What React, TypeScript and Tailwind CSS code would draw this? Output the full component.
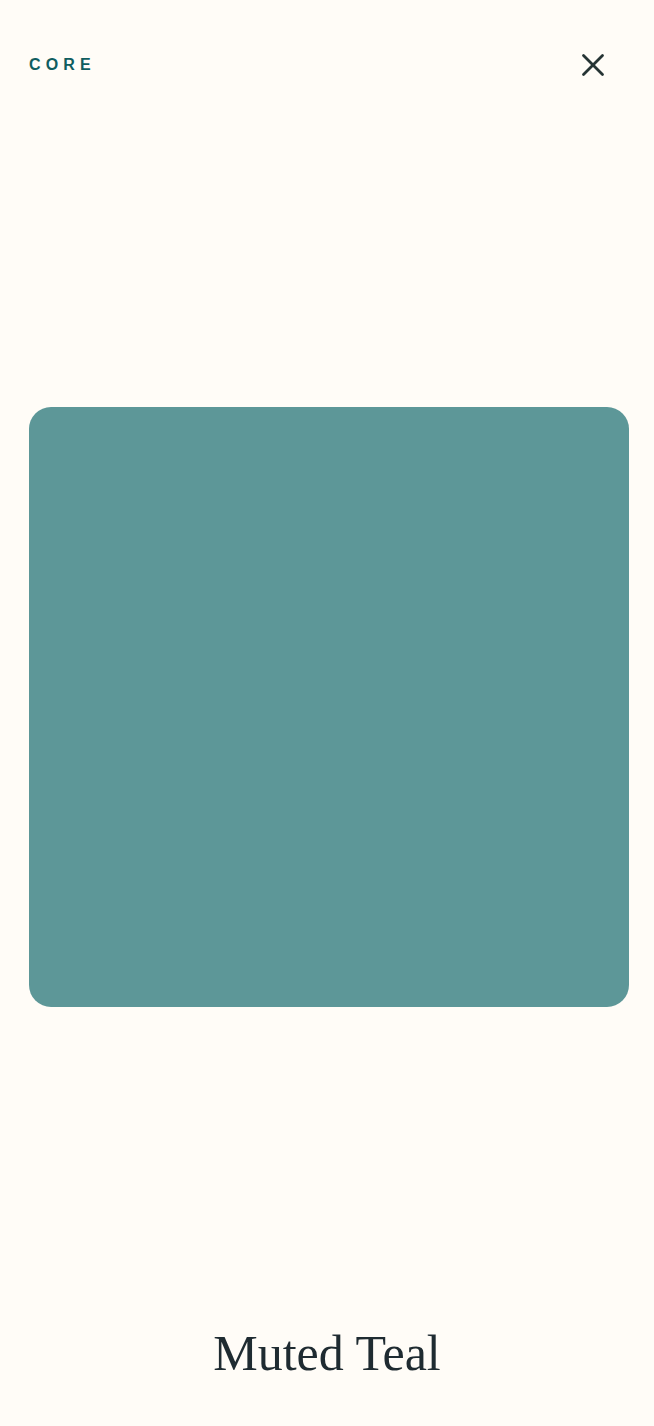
import React from "react";

export default function App() {
  return (
    <div className="flex min-h-screen w-full flex-col bg-[#fffcf7]">
      <header className="flex h-[128px] items-center justify-between pl-[29px] pr-[47px] pt-[2px]">
        <span
          className="text-[16px] font-bold leading-none tracking-[0.32em] text-[#0f5d5f]"
          style={{ fontFamily: '"Liberation Sans", Arial, sans-serif' }}
        >
          CORE
        </span>
        <button className="flex h-[28px] w-[28px] items-center justify-center text-[#263434]" aria-label="Close">
          <svg width="24" height="24" viewBox="0 0 24 24" fill="none" stroke="currentColor" strokeWidth="2.8" strokeLinecap="round">
            <path d="M2.5 2.5L21.5 21.5" />
            <path d="M21.5 2.5L2.5 21.5" />
          </svg>
        </button>
      </header>
      <main className="flex flex-1 items-center justify-start pl-[29px]">
        <div className="h-[600px] w-[600px] rounded-[22px] bg-[#5d9798]" />
      </main>
      <footer className="flex h-[140px] items-start justify-center pt-[37px]">
        <h1
          className="text-[50px] leading-[1.2] text-[#1f2b31]"
          style={{ fontFamily: '"Liberation Serif", "Times New Roman", serif' }}
        >
          Muted Teal
        </h1>
      </footer>
    </div>
  );
}
